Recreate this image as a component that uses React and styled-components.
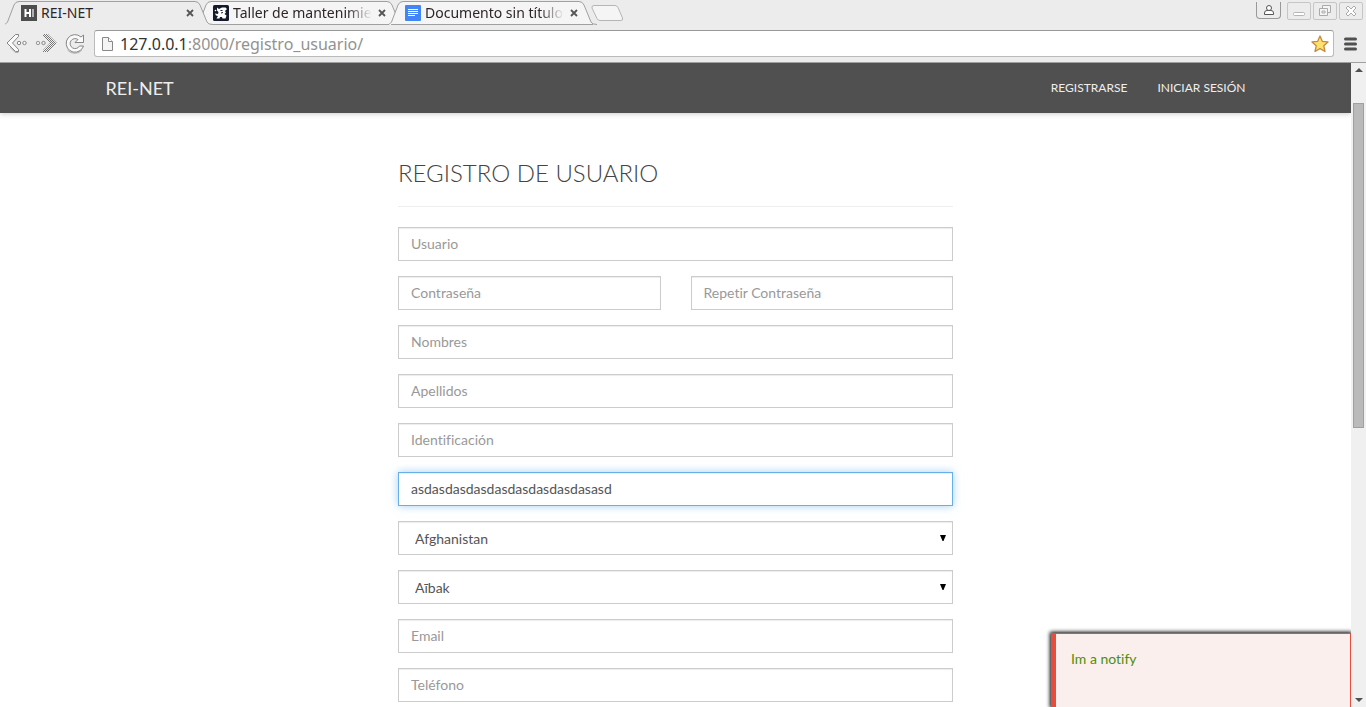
import React from "react";
import styled, { createGlobalStyle, css } from "styled-components";

const GlobalStyle = createGlobalStyle`
  *, *::before, *::after { box-sizing: border-box; }
  html, body { margin: 0; height: 100%; }
  #root { height: 100%; }
  body {
    font-family: Lato, "Liberation Sans", sans-serif;
    font-size: 14px;
    line-height: 20px;
    font-variant-ligatures: none;
    color: #555;
    background: #fff;
    overflow: hidden;
  }
  button, input, select { font: inherit; font-variant-ligatures: none; }
`;

const Window = styled.div`
  display: flex;
  flex-direction: column;
  height: 100vh;
`;

/* Browser frame */
const Chrome = styled.header`
  flex: none;
  background: #ececec;
  border-bottom: 1px solid #a0a0a0;
  font-family: "Noto Sans", "Open Sans", sans-serif;
`;

const TabStrip = styled.div`
  display: flex;
  align-items: flex-start;
  height: 25px;
  padding-left: 5px;
`;

const Tab = styled.div`
  position: relative;
  flex: none;
  display: flex;
  align-items: center;
  width: 208px;
  height: 25px;
  margin-right: -16px;
  padding: 1px 18px 0 16px;
  z-index: ${(p) => (p.$active ? 3 : 1)};
`;

const TabShape = styled.svg`
  position: absolute;
  left: 0;
  top: 0;
  z-index: -1;
`;

const TabIcon = styled.svg`
  flex: none;
  width: 16px;
  height: 16px;
  margin-right: 4px;
`;

const TabTitle = styled.span`
  flex: 1;
  min-width: 0;
  overflow: hidden;
  white-space: nowrap;
  font-size: 14px;
  line-height: 20px;
  color: #2e2529;
  ${(p) =>
    p.$fade &&
    css`
      mask-image: linear-gradient(to right, #000 82%, transparent);
    `}
`;

const PlainButton = styled.button`
  flex: none;
  display: flex;
  align-items: center;
  justify-content: center;
  padding: 0;
  border: 0;
  background: none;
`;

const TabClose = styled(PlainButton)`
  width: 12px;
  height: 16px;
  margin: 0 -1px 0 4px;
`;

const NewTab = styled(PlainButton)`
  margin: 5px 0 0 10px;
`;

const WindowControls = styled.div`
  display: flex;
  gap: 2px;
  margin-left: auto;
  padding: 2px 3px 0 0;
`;

const WindowButton = styled(PlainButton)`
  width: 24px;
  height: 18px;
  border: 1px solid #c6c6c6;
  border-radius: 2px;
`;

const ProfileButton = styled(WindowButton)`
  width: 25px;
  height: 17px;
  margin-right: 4px;
  border-color: #999;
  border-top: 0;
  border-radius: 0 0 4px 4px;
`;

const Toolbar = styled.div`
  display: flex;
  align-items: center;
  height: 37px;
  padding: 0 9px 0 6px;
`;

const NavButtons = styled.div`
  display: flex;
  gap: 7px;
  margin-right: 8px;
`;

const NavButton = styled(PlainButton)`
  width: 22px;
  height: 24px;
`;

const AddressBar = styled.div`
  flex: 1;
  display: flex;
  align-items: center;
  height: 27px;
  margin-right: 10px;
  padding: 0 4px 0 6px;
  background: #fff;
  border: 1px solid #bbb;
  border-top-color: #999;
  border-radius: 3px;
`;

const Address = styled.a`
  flex: 1;
  margin-left: 6px;
  font-size: 16px;
  line-height: 22px;
  color: #929292;
  text-decoration: none;
`;

const Host = styled.span`
  color: #2e3436;
`;

/* Page */
const Viewport = styled.div`
  flex: 1;
  display: flex;
  min-height: 0;
`;

const Page = styled.div`
  position: relative;
  flex: 1;
  min-width: 0;
  overflow: hidden;
`;

const Navbar = styled.nav`
  background: #505050;
  box-shadow: 0 1px 5px rgba(0, 0, 0, 0.2);
`;

const Container = styled.div`
  display: flex;
  align-items: center;
  max-width: 1170px;
  height: 50px;
  margin: 0 auto;
  padding: 0 15px;
`;

const Brand = styled.a`
  font-size: 18px;
  color: #eee;
  text-decoration: none;
`;

const NavLinks = styled.div`
  display: flex;
  gap: 30px;
  margin-left: auto;
`;

const NavLink = styled.a`
  font-size: 12px;
  color: #eee;
  text-transform: uppercase;
  text-decoration: none;
`;

const Main = styled.main`
  width: 100%;
  max-width: 585px;
  margin: 0 auto;
  padding: 45px 15px 0;
`;

const Title = styled.h1`
  margin: 0 0 20px;
  padding-bottom: 19px;
  border-bottom: 1px solid #eee;
  font-size: 24px;
  font-weight: 300;
  line-height: 29px;
  color: #444;
  text-transform: uppercase;
`;

const Form = styled.form`
  display: flex;
  flex-direction: column;
  gap: 15px;
`;

const FieldRow = styled.div`
  display: grid;
  grid-template-columns: 1fr 1fr;
  gap: 30px;
`;

const control = css`
  display: block;
  width: 100%;
  height: 34px;
  border: 1px solid #ccc;
  border-radius: 0;
  outline: 0;
  background: #fff;
  color: #555;
  box-shadow: inset 0 1px 1px rgba(0, 0, 0, 0.075);
`;

const Input = styled.input`
  ${control}
  padding: 5px 12px 7px;
  &::placeholder {
    color: #999;
    opacity: 1;
  }
  ${(p) =>
    p.$focused &&
    css`
      border-color: #66afe9;
      box-shadow: inset 0 1px 1px rgba(0, 0, 0, 0.075), 0 0 8px rgba(102, 175, 233, 0.6);
    `}
`;

const SelectBox = styled.div`
  position: relative;
`;

const Select = styled.select`
  ${control}
  appearance: none;
  padding: 7px 16px 5px;
`;

const SelectArrow = styled.svg`
  position: absolute;
  top: 14px;
  right: 7px;
  pointer-events: none;
`;

const Notify = styled.div`
  position: absolute;
  right: 0;
  bottom: 0;
  width: 300px;
  height: 74px;
  padding: 15px;
  background: #fbefee;
  border: 1px solid #e74c3c;
  border-left-width: 5px;
  border-bottom: 0;
  box-shadow: 0 0 4px 1px #000;
  color: #4c8e0b;
`;

const Scrollbar = styled.div`
  flex: none;
  display: flex;
  flex-direction: column;
  align-items: center;
  width: 15px;
  background: #f0f0f0;
`;

const ScrollArrow = styled(PlainButton)`
  width: 15px;
  height: 14px;
`;

const ScrollTrack = styled.div`
  flex: 1;
  width: 11px;
  padding-top: 26px;
`;

const ScrollThumb = styled.div`
  height: 55%;
  background: #bababa;
  border: 1px solid #a0a0a0;
`;

const siteIcon = (
  <>
    <rect width="16" height="16" fill="#4d4d4d" />
    <path d="M4.5 4v8M9 4v8M4.5 8H9" stroke="#fff" strokeWidth="2" fill="none" />
    <path d="M12 4v8" stroke="#d5d5d5" strokeWidth="1.5" />
  </>
);

const workshopIcon = (
  <>
    <rect width="16" height="16" rx="1.500" fill="#141a2b" />
    <path
      d="M4 2.500L6 4l3-1.500h3.500L14 4l-2 2 1 1.500-1.500 1.500 2 1.500-1 3H9.500L9 12H7l-.5 1.500H3.500L5 11 3 10.500 2 8.500l3 .5.500-2L4 5.500z"
      fill="#fff"
    />
    <path d="M7.500 5.500h2M8 8l2-.5" stroke="#141a2b" />
    <circle cx="2.500" cy="5.500" r=".8" fill="#fff" />
  </>
);

const docsIcon = (
  <>
    <rect width="16" height="16" rx="1" fill="#4285f4" />
    <path d="M3 4.500h10M3 6.500h10M3 8.500h10M3 10.500h7" stroke="#fff" />
  </>
);

const tabs = [
  { title: "REI-NET", icon: siteIcon, active: true },
  { title: "Taller de mantenimiento", icon: workshopIcon },
  { title: "Documento sin título", icon: docsIcon },
];

function BrowserTab({ title, icon, active }) {
  const outline =
    "M-2 24.500Q1 24.500 2.500 22L9 5Q10.500 1.500 14 1.500H190Q193.500 1.500 195 5L202 22Q203 24.500 208 24.500";
  return (
    <Tab $active={active}>
      <TabShape width="208" height="25" viewBox="0 0 208 25">
        <path d={`${outline}V25H-2Z`} fill={active ? "#ececec" : "#f5f5f5"} />
        <path d={outline} fill="none" stroke="#a0a0a0" />
        {!active && <path d="M2 24.500H204" stroke="#a0a0a0" />}
      </TabShape>
      <TabIcon viewBox="0 0 16 16">{icon}</TabIcon>
      <TabTitle $fade={!active}>{title}</TabTitle>
      <TabClose type="button" aria-label="Cerrar pestaña">
        <svg width="8" height="8" viewBox="0 0 8 8">
          <path d="M1 1l6 6M7 1L1 7" stroke="#555" strokeWidth="1.8" />
        </svg>
      </TabClose>
    </Tab>
  );
}

function BackGlyph() {
  return (
    <>
      <path
        d="M9.500 1.500L1 10l8.500 8.500h3V16.500L6.500 10l6-6.500v-2z"
        fill="#fafafa"
        stroke="#858585"
        strokeLinejoin="round"
      />
      <path d="M4 14.500l5.500 5h3" fill="none" stroke="#777" strokeOpacity=".5" />
      <circle cx="13" cy="10" r="1.700" fill="#fafafa" stroke="#858585" />
      <circle cx="18.500" cy="10" r="1.700" fill="#fafafa" stroke="#858585" />
    </>
  );
}

function ForwardGlyph() {
  return (
    <>
      <defs>
        <pattern id="dither" width="2" height="2" patternUnits="userSpaceOnUse">
          <rect width="2" height="2" fill="#f2f2f2" />
          <rect width="1" height="1" fill="#777" />
          <rect x="1" y="1" width="1" height="1" fill="#777" />
        </pattern>
      </defs>
      <path d="M8 1h5l9 9-9 9H8v-2l7-7-7-7z" fill="url(#dither)" />
      <circle cx="3" cy="10" r="1.700" fill="none" stroke="#999" />
      <circle cx="8.500" cy="10" r="1.700" fill="none" stroke="#888" />
    </>
  );
}

function ReloadGlyph() {
  return (
    <>
      <path
        d="M18.500 15A8.800 8.800 0 1 1 17 4l2.500-2V9.500H11l3-3A5 5 0 1 0 15.500 13H19.500Z"
        fill="#fafafa"
        stroke="#858585"
        strokeLinejoin="round"
      />
      <path d="M3.500 17A9.500 9.500 0 0 0 18 17" fill="none" stroke="#777" strokeOpacity=".5" />
    </>
  );
}

const navButtons = [
  { label: "Atrás", Glyph: BackGlyph },
  { label: "Adelante", Glyph: ForwardGlyph },
  { label: "Recargar", Glyph: ReloadGlyph },
];

function BrowserChrome() {
  return (
    <Chrome>
      <TabStrip>
        {tabs.map((tab) => (
          <BrowserTab key={tab.title} {...tab} />
        ))}
        <NewTab type="button" aria-label="Nueva pestaña">
          <svg width="33" height="17" viewBox="0 0 33 17">
            <path
              d="M3 .5H24Q26 .5 27 2.500L31.500 13Q32 15.500 30 15.500H9Q7 15.500 6 13.500L1 3Q.5.5 3 .5Z"
              fill="#f5f5f5"
              stroke="#b5b5b5"
            />
          </svg>
        </NewTab>
        <WindowControls>
          <ProfileButton type="button" aria-label="Perfil">
            <svg width="12" height="12" viewBox="0 0 12 12" fill="#fff" stroke="#555">
              <path d="M1.500 10.500V9Q1.500 6.500 4 6.500H8Q10.500 6.500 10.500 9v1.500z" />
              <circle cx="6" cy="4" r="2.500" />
            </svg>
          </ProfileButton>
          <WindowButton type="button" aria-label="Minimizar">
            <svg width="12" height="12" viewBox="0 0 12 12">
              <rect x=".5" y="7.500" width="11" height="3" rx="1" fill="#fff" stroke="#b5b5b5" />
            </svg>
          </WindowButton>
          <WindowButton type="button" aria-label="Restaurar">
            <svg width="12" height="12" viewBox="0 0 12 12" fill="#f5f5f5" stroke="#aaa">
              <path d="M3.500.5h8v7h-8z" />
              <path d="M.5 3.500h8v7h-8zM3 6h3v2H3z" />
            </svg>
          </WindowButton>
          <WindowButton type="button" aria-label="Cerrar">
            <svg width="12" height="12" viewBox="0 0 12 12">
              <path
                d="M1 3l2-2 3 3 3-3 2 2-3 3 3 3-2 2-3-3-3 3-2-2 3-3z"
                fill="#fff"
                stroke="#aaa"
              />
            </svg>
          </WindowButton>
        </WindowControls>
      </TabStrip>
      <Toolbar>
        <NavButtons>
          {navButtons.map(({ label, Glyph }) => (
            <NavButton key={label} type="button" aria-label={label}>
              <svg width="22" height="22" viewBox="0 0 22 22">
                <Glyph />
              </svg>
            </NavButton>
          ))}
        </NavButtons>
        <AddressBar>
          <svg width="13" height="16" viewBox="0 0 13 16">
            <path d="M1.500 1.500h6l4 4v9h-10z" fill="#f4f4f4" stroke="#888" />
            <path d="M7.500 1.500v4h4" fill="#fff" stroke="#888" />
          </svg>
          <Address href="#registro">
            <Host>127.0.0.1</Host>:8000/registro_usuario/
          </Address>
          <PlainButton type="button" aria-label="Marcador">
            <svg width="18" height="18" viewBox="0 0 18 18">
              <path
                d="M9 1l2.300 5.300 5.700.6-4.200 3.900 1.200 5.700L9 13.600l-5 2.900 1.200-5.700L1 6.900l5.700-.6z"
                fill="#ffe06b"
                stroke="#c48b3f"
                strokeWidth="1.300"
                strokeLinejoin="round"
              />
            </svg>
          </PlainButton>
        </AddressBar>
        <PlainButton type="button" aria-label="Menú">
          <svg width="13" height="14" viewBox="0 0 13 14">
            <path d="M1.500 2h10M1.500 7h10M1.500 12h10" stroke="#505050" strokeWidth="3" strokeLinecap="round" />
          </svg>
        </PlainButton>
      </Toolbar>
    </Chrome>
  );
}

function TextField({ label, ...rest }) {
  return <Input aria-label={label} placeholder={label} {...rest} />;
}

function SelectField({ label, option }) {
  return (
    <SelectBox>
      <Select aria-label={label}>
        <option>{option}</option>
      </Select>
      <SelectArrow width="6" height="7" viewBox="0 0 6 7">
        <path d="M0 0h6L3.500 6h-1z" fill="#000" />
      </SelectArrow>
    </SelectBox>
  );
}

export default function App() {
  return (
    <Window>
      <GlobalStyle />
      <BrowserChrome />
      <Viewport>
        <Page>
          <Navbar>
            <Container>
              <Brand href="#inicio">REI-NET</Brand>
              <NavLinks>
                <NavLink href="#registro">Registrarse</NavLink>
                <NavLink href="#sesion">Iniciar sesión</NavLink>
              </NavLinks>
            </Container>
          </Navbar>
          <Main>
            <Title>Registro de usuario</Title>
            <Form>
              <TextField label="Usuario" />
              <FieldRow>
                <TextField label="Contraseña" type="password" />
                <TextField label="Repetir Contraseña" type="password" />
              </FieldRow>
              <TextField label="Nombres" />
              <TextField label="Apellidos" />
              <TextField label="Identificación" />
              <TextField label="Dirección" defaultValue="asdasdasdasdasdasdasdasdasasd" $focused />
              <SelectField label="País" option="Afghanistan" />
              <SelectField label="Ciudad" option="Aībak" />
              <TextField label="Email" type="email" />
              <TextField label="Teléfono" type="tel" />
            </Form>
          </Main>
          <Notify role="status">Im a notify</Notify>
        </Page>
        <Scrollbar>
          <ScrollArrow type="button" aria-label="Subir">
            <svg width="8" height="4" viewBox="0 0 8 4">
              <path d="M0 4L4 0l4 4z" fill="#505050" />
            </svg>
          </ScrollArrow>
          <ScrollTrack>
            <ScrollThumb />
          </ScrollTrack>
          <ScrollArrow type="button" aria-label="Bajar">
            <svg width="8" height="4" viewBox="0 0 8 4">
              <path d="M0 0l4 4 4-4z" fill="#505050" />
            </svg>
          </ScrollArrow>
        </Scrollbar>
      </Viewport>
    </Window>
  );
}
